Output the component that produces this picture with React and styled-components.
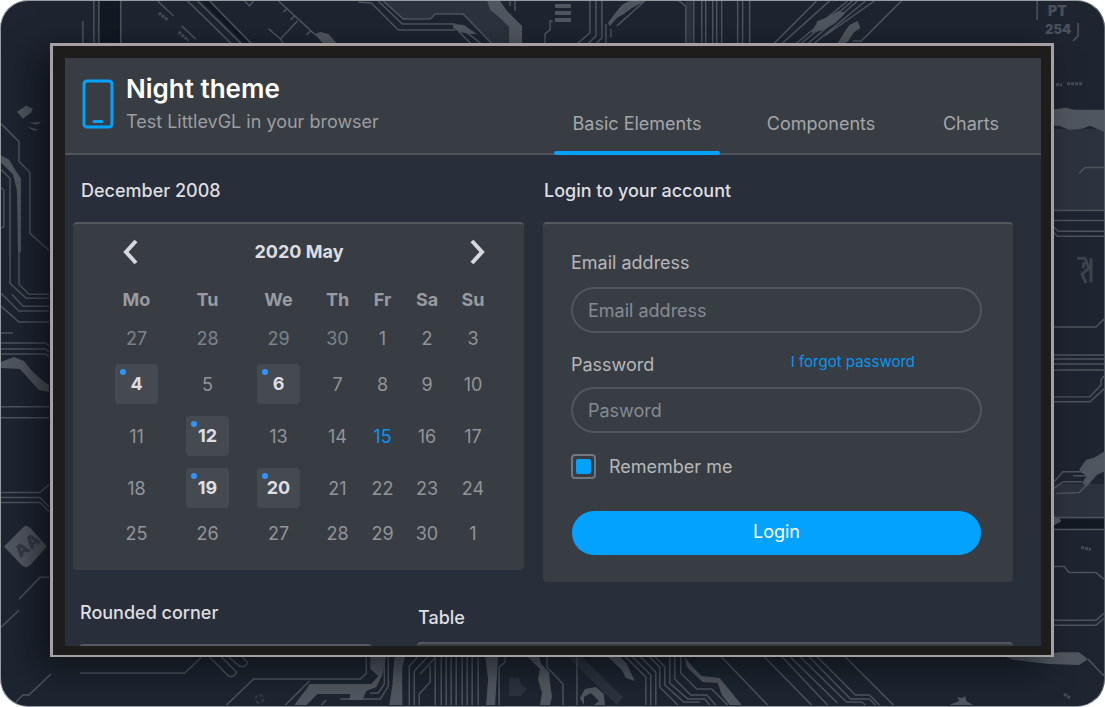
import React from 'react';
import styled, { createGlobalStyle, css } from 'styled-components';

const GlobalStyle = createGlobalStyle`
  *, *::before, *::after { box-sizing: border-box; }
  body {
    margin: 0;
    background: #ffffff;
    font-family: Inter, "Open Sans", sans-serif;
    font-size: 18px;
    line-height: 24px;
    color: #9b9da1;
  }
  button, input { font: inherit; color: inherit; }
`;

const Backdrop = styled.div`
  position: relative;
  display: flex;
  height: 100vh;
  min-height: 420px;
  padding: 42px 50px 49px 49px;
  overflow: hidden;
  border: 1px solid #959da1;
  border-right-color: #59616a;
  border-radius: 28px;
  background: #1e2530;
`;

const CircuitArt = styled.svg`
  position: absolute;
  inset: 0;
  width: 100%;
  height: 100%;
`;

const Device = styled.div`
  position: relative;
  display: flex;
  flex: 1;
  min-width: 0;
  padding: 12px 10px 9px 12px;
  border: 3px solid #a5a1a3;
  border-width: 3px 3px 2px 3px;
  background: #1f1d1b;
  box-shadow: -12px 10px 30px rgba(4, 7, 12, 0.6);
`;

const Screen = styled.div`
  display: flex;
  flex: 1;
  flex-direction: column;
  min-width: 0;
  overflow: hidden;
  background: #282e3a;
`;

const Header = styled.header`
  display: flex;
  flex: none;
  height: 97px;
  padding-left: 17px;
  border-bottom: 2px solid #51555b;
  background: #383d44;
`;

const Brand = styled.div`
  display: flex;
  align-items: flex-start;
  gap: 12px;
  padding-top: 15px;
`;

const PhoneIcon = styled.svg`
  width: 32px;
  height: 50px;
  margin-top: 6px;
`;

const BrandName = styled.h1`
  margin: 0;
  font-size: 26px;
  line-height: 32px;
  font-weight: 600;
  color: #ffffff;
`;

const Tagline = styled.p`
  margin: 5px 0 0;
  color: #9b9da1;
`;

const Tabs = styled.nav`
  display: grid;
  grid-template-columns: 166px 202px 98px;
  align-items: end;
  margin-left: auto;
  margin-right: 21px;
`;

const Tab = styled.button`
  position: relative;
  padding: 0 0 17px;
  border: 0;
  background: none;
  color: #a4a6a9;
  ${({ $active }) => $active && css`
    &::after {
      content: "";
      position: absolute;
      inset: auto 0 -2px;
      height: 4px;
      border-radius: 2px;
      background: #03a2ff;
    }
  `}
`;

const Content = styled.main`
  flex: 1;
  min-height: 0;
  overflow: hidden;
`;

const PrimaryRow = styled.div`
  display: grid;
  grid-template-columns: 451fr 470fr;
  gap: 19px;
  align-items: start;
  padding: 0 28px 0 8px;
`;

const SecondaryRow = styled.div`
  display: grid;
  grid-template-columns: 293fr 596fr;
  gap: 45px;
  padding: 0 28px 0 14px;
`;

const SectionTitle = styled.h2`
  margin: 0;
  padding: 24px 0 19px ${({ $inset = 1 }) => $inset}px;
  font-size: 18px;
  line-height: 24px;
  font-weight: 500;
  color: #dedee0;
  ${({ $spacing }) => $spacing === 'even' && css`
    padding-top: 19px;
  `}
  ${({ $spacing }) => $spacing === 'low' && css`
    padding-bottom: 12px;
  `}
`;

const Card = styled.div`
  min-height: 60px;
  border-top: 2px solid #55585e;
  border-radius: 4px;
  background: #383d44;
`;

const CalendarCard = styled(Card)`
  padding: 0 28px 17px;
`;

const MonthBar = styled.div`
  display: flex;
  align-items: center;
  justify-content: space-between;
  height: 57px;
  padding: 0 7px 2px 18px;
`;

const MonthName = styled.span`
  padding-right: 10px;
  font-weight: 700;
  color: #dcdde1;
`;

const ArrowButton = styled.button`
  display: grid;
  place-items: center;
  width: 24px;
  height: 32px;
  padding: 0;
  border: 0;
  background: none;
  color: #d7d8dd;
`;

const DayTable = styled.table`
  width: 100%;
  table-layout: fixed;
  border-collapse: collapse;
`;

const WeekdayCell = styled.th`
  height: 38px;
  padding: 0;
  font-weight: 700;
  color: #999ba0;
`;

const DayCell = styled.td`
  height: ${({ $tall }) => ($tall ? 52 : 39)}px;
  padding: 0;
  text-align: center;
`;

const Day = styled.button`
  position: relative;
  width: 43px;
  height: 24px;
  padding: 0;
  border: 0;
  border-radius: 4px;
  background: none;
  vertical-align: middle;
  color: ${({ $tone }) => ({ today: '#0796ef', outside: '#7b838d' }[$tone] || '#929498')};
  ${({ $marked }) => $marked && css`
    height: 40px;
    background: #454a51;
    color: #dddee4;
    font-weight: 700;
    &::before {
      content: "";
      position: absolute;
      top: 5px;
      left: 5px;
      width: 6px;
      height: 6px;
      border-radius: 50%;
      background: #3094ff;
    }
  `}
`;

const LoginCard = styled(Card).attrs({ as: 'form' })`
  display: flex;
  flex-direction: column;
  padding: 27px 31px 27px 28px;
`;

const FieldHeader = styled.div`
  display: flex;
  justify-content: space-between;
  padding-right: 67px;
`;

const FieldLabel = styled.label`
  color: #b5b7ba;
`;

const ForgotLink = styled.a`
  font-size: 15px;
  line-height: 18px;
  color: #0796ef;
  text-decoration: none;
`;

const TextField = styled.input`
  width: 100%;
  height: 46px;
  margin: ${({ $first }) => ($first ? '12px 0 20px' : '10px 0 21px')};
  padding: 0 15px;
  border: 2px solid #52555d;
  border-radius: 23px;
  background: transparent;
  outline: 0;
  &::placeholder { color: #858b93; opacity: 1; }
`;

const RememberRow = styled.div`
  display: flex;
  align-items: center;
  gap: 13px;
`;

const Checkbox = styled.input`
  appearance: none;
  display: grid;
  place-items: center;
  width: 25px;
  height: 25px;
  margin: 0;
  border: 2px solid #74777d;
  border-radius: 4px;
  &:checked::before {
    content: "";
    width: 15px;
    height: 15px;
    border-radius: 2px;
    background: #03a2ff;
  }
`;

const LoginButton = styled.button`
  height: 44px;
  margin: 32px 1px 0;
  padding: 0 0 2px;
  border: 0;
  border-radius: 22px;
  background: #03a2ff;
  color: #ffffff;
`;

const weekdays = [
  ['Mo', 71], ['Tu', 71], ['We', 71], ['Th', 47], ['Fr', 43], ['Sa', 46], ['Su', 46],
];
const weeks = [
  [27, 28, 29, 30, 1, 2, 3],
  [4, 5, 6, 7, 8, 9, 10],
  [11, 12, 13, 14, 15, 16, 17],
  [18, 19, 20, 21, 22, 23, 24],
  [25, 26, 27, 28, 29, 30, 1],
];
const markedDays = [4, 6, 12, 19, 20];

function Calendar() {
  return (
    <CalendarCard>
      <MonthBar>
        <ArrowButton aria-label="Previous month">
          <svg width="16" height="26" fill="none" stroke="currentColor" strokeWidth="4">
            <path d="M13 2 3 13 13 24" />
          </svg>
        </ArrowButton>
        <MonthName>2020 May</MonthName>
        <ArrowButton aria-label="Next month">
          <svg width="16" height="26" fill="none" stroke="currentColor" strokeWidth="4">
            <path d="M3 2 13 13 3 24" />
          </svg>
        </ArrowButton>
      </MonthBar>
      <DayTable>
        <colgroup>
          {weekdays.map(([name, share]) => <col key={name} width={`${(share / 395) * 100}%`} />)}
        </colgroup>
        <thead>
          <tr>{weekdays.map(([name]) => <WeekdayCell key={name} scope="col">{name}</WeekdayCell>)}</tr>
        </thead>
        <tbody>
          {weeks.map((week, row) => (
            <tr key={row}>
              {week.map((day, col) => {
                const marked = row > 0 && row < 4 && markedDays.includes(day);
                const tone = row === 0 && day > 20 ? 'outside' : day === 15 ? 'today' : 'normal';
                return (
                  <DayCell key={col} $tall={row > 0 && row < 4}>
                    <Day type="button" $marked={marked} $tone={tone}>{day}</Day>
                  </DayCell>
                );
              })}
            </tr>
          ))}
        </tbody>
      </DayTable>
    </CalendarCard>
  );
}

const fadedShapes = [
  'M383 0 403 18H430L435 13H463L492 43H510V25L487 0Z',
  'M1053 128H1105V210H1053Z',
  'M1053 484H1105V518H1053Z',
  'M686 0H693V44H686Z',
  'M567 657H581L623 698 617 706Z',
  'M509 679H519L521 686 527 690 521 697H509Z',
];
const darkShapes = [
  'M99 0H119V44H99Z',
  'M201 0H209L251 43H244Z',
  'M1053 520H1105V529H1053Z',
];
const brightShapes = [
  'M487 0H500L507 10 522 25V44H509V26L499 16 490 9Z',
  'M314 33 320 31 328 33 338 44H324Z',
  'M453 23 464 24 468 27 477 33 470 33 459 31 453 27Z',
  'M555 3H571V7H555ZM555 10H571V14H555ZM555 17H571V21H555Z',
  'M608 22 613 15 622 4 629 0H645L632 7 624 13 617 17 610 25Z',
  'M812 32 818 20 826 17 839 10 846 12 836 22 824 29Z',
  'M837 44 845 31 850 24 858 20 861 27 854 32 849 40 843 44Z',
  'M1053 109 1067 107 1075 109H1105V131L1091 125 1083 128 1070 129 1060 125 1053 125Z',
  'M1080 470 1087 460 1095 458 1105 452V472L1098 475 1088 487 1083 483 1088 476Z',
  'M1053 516 1060 518 1062 522 1053 527Z',
  'M1000 655 1025 657 1060 653H1080L1089 660 1080 666 1050 665 1015 661Z',
  'M16 111 25 105 32 108 30 112 22 118ZM28 122 41 121 36 124ZM26 126 38 129 33 130Z',
  'M0 155 8 159 14 169 20 178 20 252 17 252 16 190 12 174 0 162Z',
  'M0 362 13 357 23 361 31 371 41 380 48 385V392L38 390 28 379 19 369 0 368Z',
  'M3 547 22 528 25 526 29 528 46 547 29 566 25 568 21 566Z',
  'M294 706 299 699 306 690 309 685H371L378 677 370 670 370 657H386L382 676 376 688 366 692 362 701H349L350 695H317L306 706Z',
  'M389 706 392 687 394 657H405L402 669 402 706Z',
  'M485 657H498L495 706H486L488 680Z',
  'M527 657H539L541 665 549 673 550 684 552 698 550 706H540L542 694 538 680 540 670Z',
  'M607 657H620L627 665 635 682 626 679 622 671Z',
  'M685 658 694 669 702 677 720 679 729 690 742 706H730L722 696 718 684 703 683 687 668Z',
  'M584 706 580 699 585 690 596 688 604 695 605 706H594L599 702 591 694 584 698Z',
  'M950 706 960 702 958 698 963 699 966 697 967 702 974 706Z',
];
const traces = [
  'M82 20V43M93 0V43M98 0V43M120 0V43M187 0 231 43M197 0 241 43M209 0 251 43',
  'M157 0 173 15M181 25 195 38M244 0 249 5 253 0M278 0 315 34M287 7 283 11M294 15 290 19M310 30 306 34M297 20 280 38M268 28 280 38 283 43',
  'M358 1 371 2 398 29H455M378 0 402 23H455M383 0 403 18H430L435 13H463L492 43M458 30 471 43M466 31 481 43',
  'M510 0V5M515 0V10M553 20 550 20V29L545 33V43',
  'M590 0V32L576 44M596 0V35L587 44M602 0V37L595 44M606 44V23M611 36V28M617 25 645 0',
  'M679 0 686 5V44M694 0V44M702 0V44M706 0V44M713 0V44M717 0V44M722 0V44M738 0V44M743 0V44M750 0V44',
  'M773 44 817 0M781 44 830 0M795 44 848 0M800 44 853 0M807 44 858 0M813 44 866 0M825 35 875 0M853 40H862L902 0',
  'M1038 0V19M1079 22V35L1074 40M1080 173 1086 167H1105M1053 210H1105M1053 220H1105M1053 225 1059 231H1105M1053 230 1058 236H1105',
  'M1053 327H1097L1105 319M1053 355H1105M1053 359H1105M1053 364H1105M1053 370H1105M1053 397H1091L1102 385V380L1105 376M1053 402H1091L1105 389',
  'M1053 484 1064 472H1082L1089 476H1074M1053 490 1064 482H1083M1057 494 1080 493 1088 485M1053 518H1105M1053 530H1105',
  'M1053 567H1065L1070 573H1097L1105 580M1053 621H1097L1105 614M1053 626H1097L1105 619M1089 660 1105 677',
  'M0 123 18 141V161L29 172V233L48 250M0 169 9 178V283L25 298H48M18 190V284L28 294H48M0 187 3 190V226L0 228',
  'M0 293 18 311H48M0 306 18 322H48M11 294 22 306H48M0 333H12M0 343H45L48 346M0 349H45L48 352M0 354H45L48 357M0 407H48M0 418H48',
  'M0 493H39L48 485M0 498H39L48 507M0 503H39L48 512M18 600 39 578H48M0 628 18 611M15 703 22 696H28L50 675',
  'M79 674H184L201 658M208 657 228 677Q233 679 236 673L220 657M227 657 239 667Q245 669 247 663L241 657',
  'M226 706 253 680H360L366 674V657M285 706 309 682M384 657V685L378 694H370M388 657V687L380 700H340M326 701 321 706',
  'M418 657 409 667V706M428 657 414 672V706M436 657 420 675M430 667V683L419 695V706',
  'M435 657V706M441 657V706M446 657V706M451 657V706M456 657V706M462 657V706M467 657V706M472 657V706M478 657V706M505 657V663L499 668V706',
  'M547 657V668L563 685V706M577 657V706M625 657 646 678V706M632 657 651 676V706M640 657 656 673V706',
  'M649 657 660 668V688L678 706M655 657 665 668V686L684 703H700M670 657V684L688 700H705L710 706M675 657V680L691 696H707L716 706M681 657V674L697 690H712L728 706',
  'M721 657 768 706M764 657 812 706M782 657 828 706M790 657 838 704M800 657 847 703H862L866 706M809 657 851 700H870L876 706M817 657 856 696H870L880 706M845 657 894 706',
];

function Circuits() {
  return (
    <CircuitArt viewBox="0 0 1105 707" preserveAspectRatio="none" aria-hidden="true">
      <g fill="#2c333e">{fadedShapes.map((d) => <path key={d} d={d} />)}</g>
      <g fill="#121923">{darkShapes.map((d) => <path key={d} d={d} />)}</g>
      <g fill="none" stroke="#4d545e" strokeWidth="1.5">{traces.map((d) => <path key={d} d={d} />)}</g>
      <g fill="#50565f">{brightShapes.map((d) => <path key={d} d={d} strokeLinejoin="round" />)}</g>
      <g fill="none" stroke="#454c55" strokeWidth="3" strokeDasharray="3 1">
        <path d="M158 12 167 19M178 31 188 40M1057 84H1063M1068 83H1083M1082 548 1092 550M1065 695 1071 699" />
      </g>
      <path d="M1078 258H1086L1090 268 1083 274 1087 283M1092 258V282M1085 262 1084 268" fill="none" stroke="#3d444e" strokeWidth="3" />
      <circle cx="259" cy="700" r="4" fill="none" stroke="#333b45" strokeWidth="2" strokeDasharray="4 2" />
      <g fill="#4a515b" fontFamily="Inter, sans-serif" fontWeight="900">
        <text x="1049" y="15" fontSize="14">PT</text>
        <text x="1046" y="33" fontSize="13">254</text>
        <text x="13" y="553" fontSize="17" fill="#343b45" transform="rotate(-38 25 547)">AA</text>
      </g>
    </CircuitArt>
  );
}

export default function App() {
  return (
    <>
      <GlobalStyle />
      <Backdrop>
        <Circuits />
        <Device>
          <Screen>
            <Header>
              <Brand>
                <PhoneIcon viewBox="0 0 32 50" aria-hidden="true">
                  <rect x="2" y="2" width="28" height="46" rx="3" fill="none" stroke="#03a2ff" strokeWidth="3" />
                  <path d="M12 42.500H20" stroke="#03a2ff" strokeWidth="3" strokeLinecap="round" />
                </PhoneIcon>
                <div>
                  <BrandName>Night theme</BrandName>
                  <Tagline>Test LittlevGL in your browser</Tagline>
                </div>
              </Brand>
              <Tabs>
                <Tab $active aria-current="page">Basic Elements</Tab>
                <Tab>Components</Tab>
                <Tab>Charts</Tab>
              </Tabs>
            </Header>
            <Content>
              <PrimaryRow>
                <section>
                  <SectionTitle $inset={8}>December 2008</SectionTitle>
                  <Calendar />
                </section>
                <section>
                  <SectionTitle>Login to your account</SectionTitle>
                  <LoginCard onSubmit={(event) => event.preventDefault()}>
                    <FieldLabel htmlFor="email">Email address</FieldLabel>
                    <TextField $first id="email" type="email" placeholder="Email address" />
                    <FieldHeader>
                      <FieldLabel htmlFor="password">Password</FieldLabel>
                      <ForgotLink href="#forgot">I forgot password</ForgotLink>
                    </FieldHeader>
                    <TextField id="password" type="password" placeholder="Pasword" />
                    <RememberRow>
                      <Checkbox id="remember" type="checkbox" defaultChecked />
                      <FieldLabel htmlFor="remember">Remember me</FieldLabel>
                    </RememberRow>
                    <LoginButton type="submit">Login</LoginButton>
                  </LoginCard>
                </section>
              </PrimaryRow>
              <SecondaryRow>
                <section>
                  <SectionTitle $spacing="even">Rounded corner</SectionTitle>
                  <Card />
                </section>
                <section>
                  <SectionTitle $spacing="low">Table</SectionTitle>
                  <Card />
                </section>
              </SecondaryRow>
            </Content>
          </Screen>
        </Device>
      </Backdrop>
    </>
  );
}
